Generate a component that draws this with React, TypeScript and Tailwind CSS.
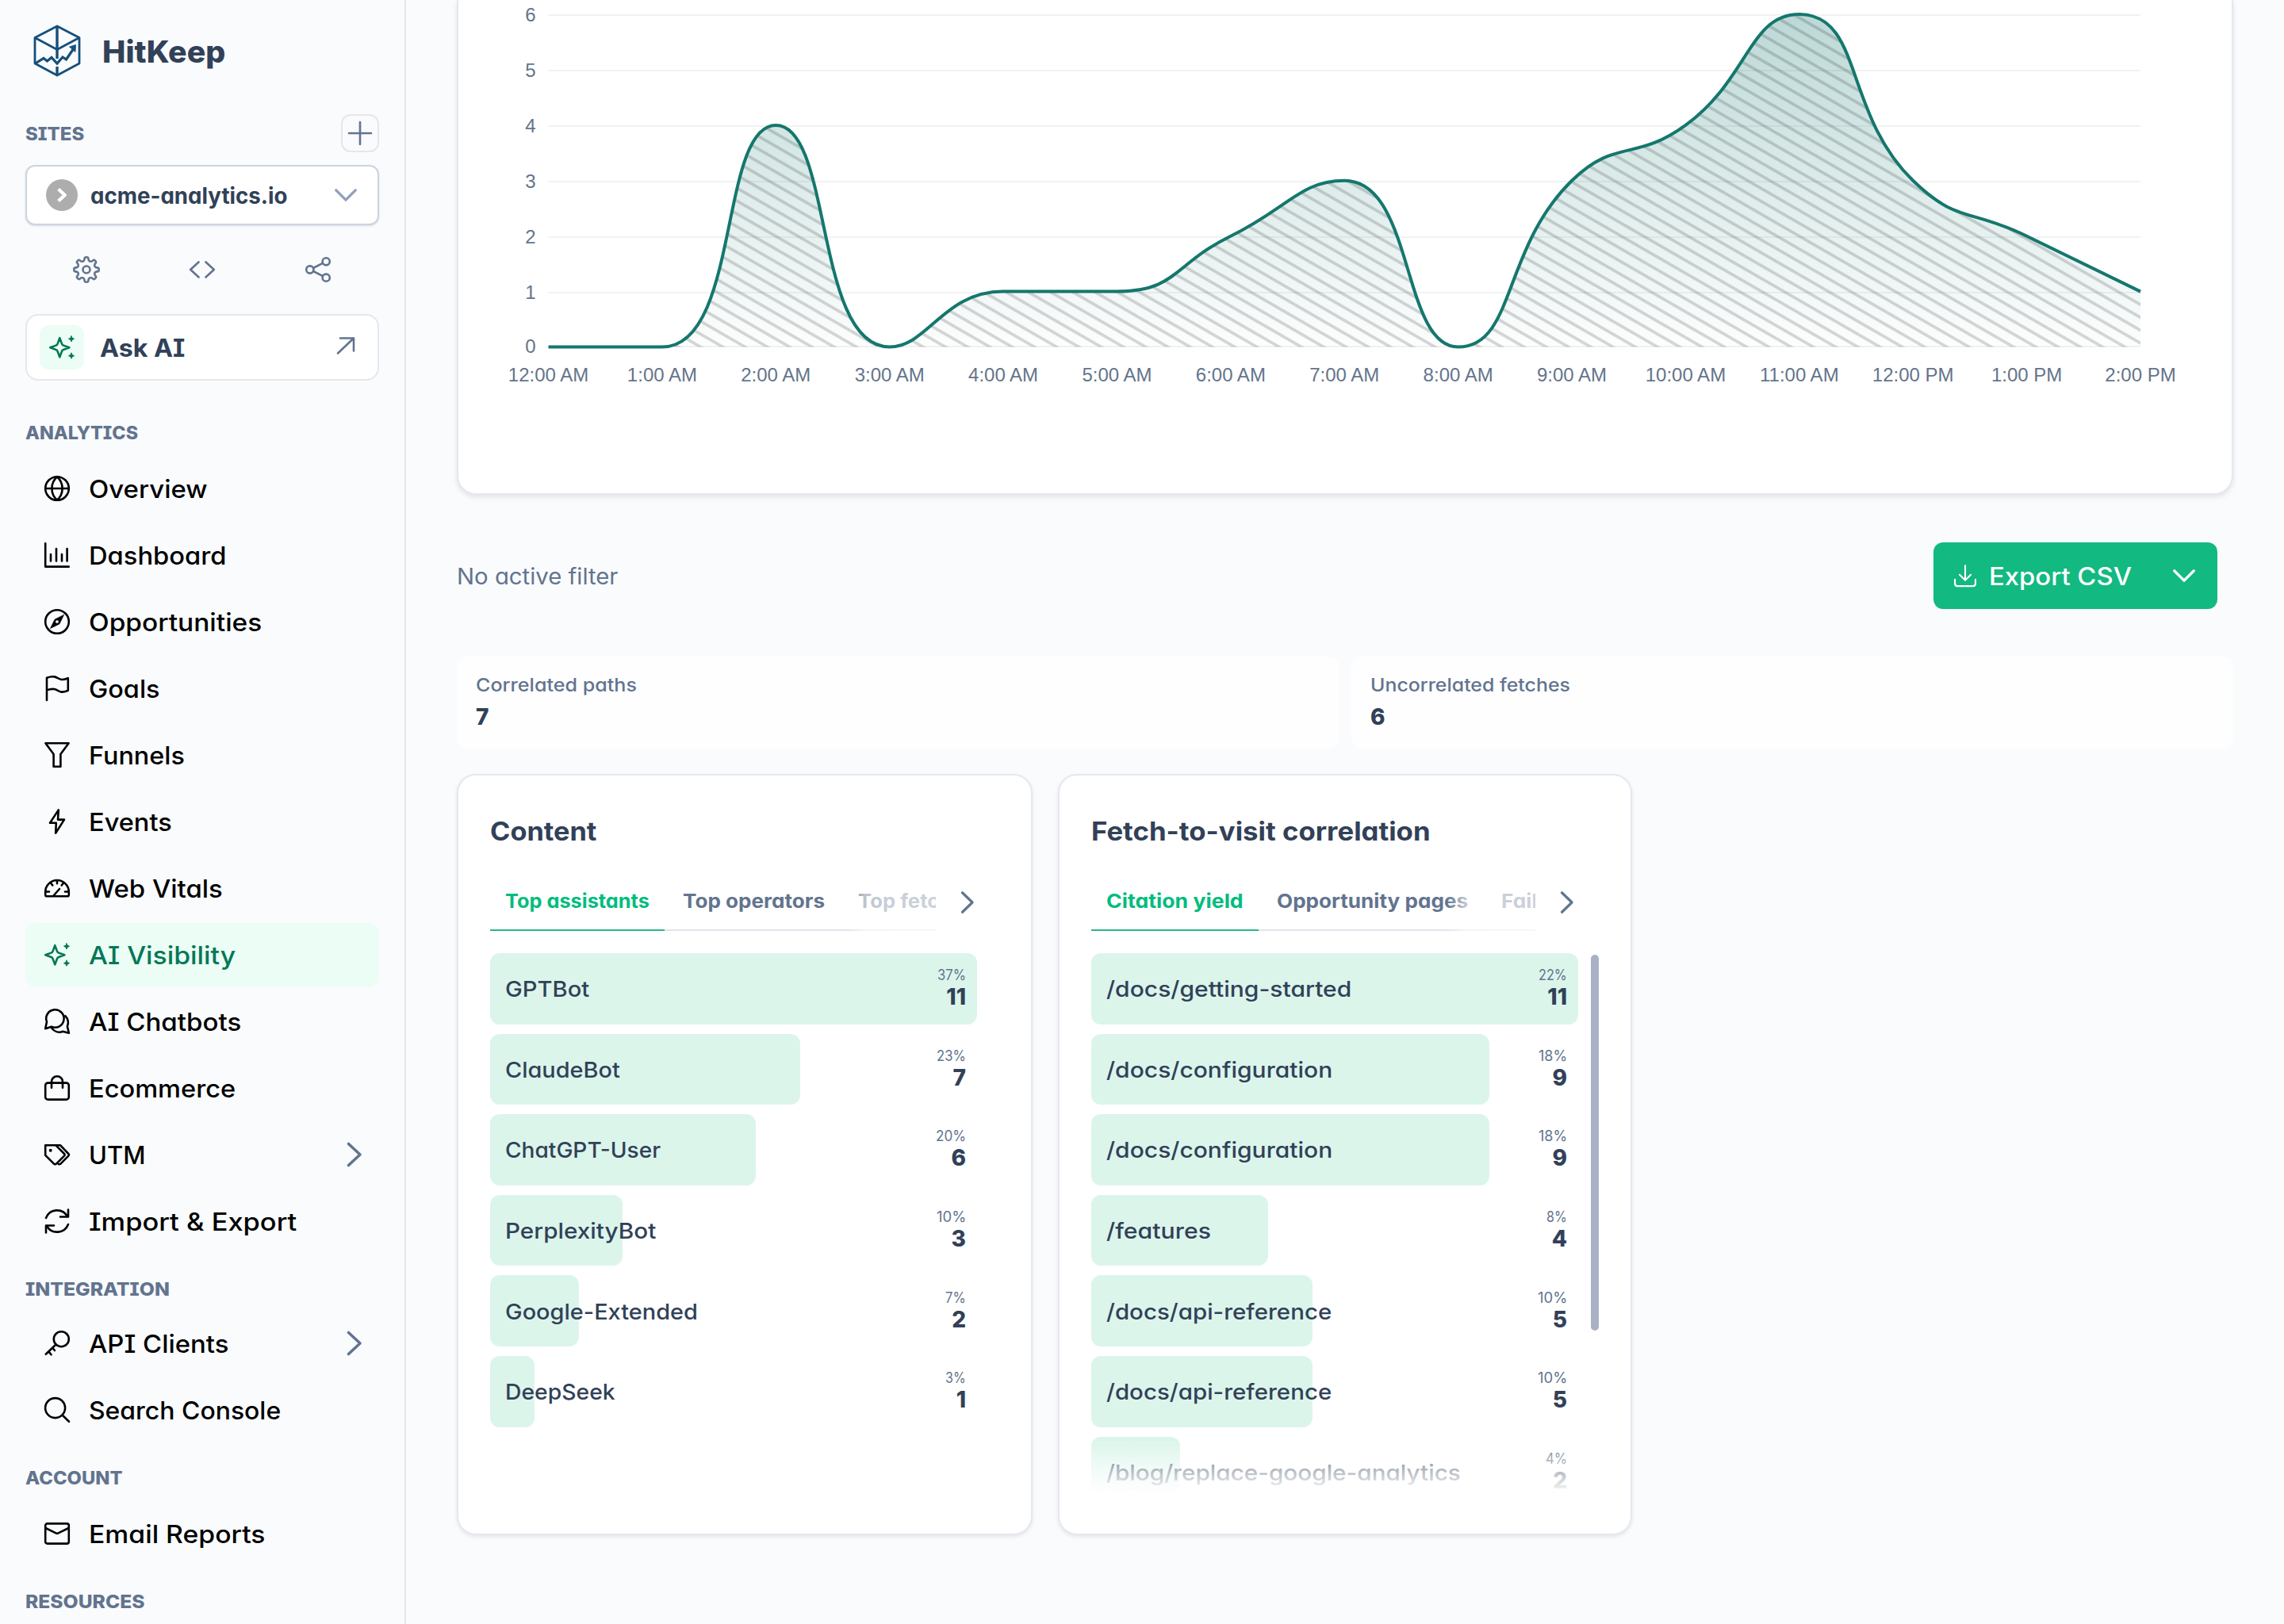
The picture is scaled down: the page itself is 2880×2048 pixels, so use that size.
import { useLayoutEffect, useRef, useState, type ReactNode } from "react";

/** Single-line text stretched horizontally so that it fills a given width. */
function Fit({ w, className = "", children }: { w: number; className?: string; children: string }) {
  const ref = useRef<HTMLSpanElement>(null);
  const [scale, setScale] = useState(1);
  useLayoutEffect(() => {
    const el = ref.current;
    if (el) setScale(w / el.offsetWidth);
  }, [w, children]);
  return (
    <span className={"inline-block shrink-0 translate-y-px whitespace-nowrap " + className} style={{ width: w }}>
      <span ref={ref} className="inline-block origin-left" style={{ transform: `scaleX(${scale})` }}>
        {children}
      </span>
    </span>
  );
}

function Icon({ children, className = "size-8", sw = 2.6 }: { children: ReactNode; className?: string; sw?: number }) {
  return (
    <svg
      viewBox="0 0 32 32"
      className={"shrink-0 overflow-visible " + className}
      fill="none"
      stroke="currentColor"
      strokeWidth={sw}
      strokeLinecap="round"
      strokeLinejoin="round"
    >
      {children}
    </svg>
  );
}

function gearPath() {
  const pts: [number, number][] = [];
  for (let k = 0; k < 8; k++) {
    const steps: [number, number][] = [
      [-20, 11.2],
      [-11, 12.6],
      [-8.5, 15.9],
      [8.5, 15.9],
      [11, 12.6],
      [20, 11.2],
    ];
    for (const [d, r] of steps) {
      const a = ((k * 45 + d - 90) * Math.PI) / 180;
      pts.push([16 + r * Math.cos(a), 16 + r * Math.sin(a)]);
    }
  }
  const mid = (a: [number, number], b: [number, number]) => `${((a[0] + b[0]) / 2).toFixed(2)} ${((a[1] + b[1]) / 2).toFixed(2)}`;
  let d = `M${mid(pts[pts.length - 1], pts[0])}`;
  pts.forEach((p, i) => {
    d += `Q${p[0].toFixed(2)} ${p[1].toFixed(2)} ${mid(p, pts[(i + 1) % pts.length])}`;
  });
  return d + "Z";
}

const icons: Record<string, ReactNode> = {
  globe: (
    <>
      <circle cx="16" cy="16" r="14.8" />
      <path d="M1.2 16h29.6M16 1.2c-4.4 4-6.6 9-6.6 14.8S11.600 26.800 16 30.800c4.400-4 6.600-9 6.600-14.800S20.400 5.200 16 1.200Z" />
    </>
  ),
  chart: (
    <>
      <path d="M1.200 1.200v29.400h29.600" />
      <path d="M8 15v8.500M15 8v15.500M22 15v8.500M28.600 8v15.500" />
    </>
  ),
  compass: (
    <>
      <circle cx="16" cy="16" r="14.800" />
      <path
        d="M24.600 7.400 19.200 18.400a1.500 1.500 0 0 1-.8.8L7.400 24.600l5.400-11a1.500 1.500 0 0 1 .8-.8ZM16 13.800a2.200 2.200 0 1 0 0 4.400 2.200 2.200 0 0 0 0-4.400Z"
        fill="currentColor"
        fillRule="evenodd"
        strokeWidth="0.600"
      />
    </>
  ),
  flag: <path d="M3 31V2.800C6 1.700 9.300 1 12.300 1.400 15.600 1.900 18.200 4.600 21.500 5c3 .3 5.800-.8 8.300-1.800v15.600c-2.500 1-5.300 2.200-8.300 1.800-3.300-.4-5.900-3.200-9.200-3.600-3-.4-6.300.3-9.300 1.400" />,
  filter: <path d="M1.400 1.300h29.200L20.400 15v15.700h-8.800V15Z" />,
  bolt: <path d="M17.800 1.400 7 17.800h7.800l-.6 12.800L25 13.600h-8Z" />,
  gauge: (
    <>
      <path d="M1.200 24.500v-3.700a14.800 14.800 0 0 1 29.600 0v3.700q0 1.800-1.800 1.800H3q-1.800 0-1.800-1.800Z" />
      <path d="M11.500 25.500 19 17M16 6.500v3.800M8 9.500l2.300 3M24 9.500l-2.300 3M2 20.500h4M30 20.500h-4" />
    </>
  ),
  sparkles: (
    <>
      <path d="M13.300 4.200 16 11.600q.5 1.500 2 2l7.400 2.700-7.400 2.700q-1.500.5-2 2l-2.700 7.400-2.700-7.400q-.5-1.500-2-2l-7.400-2.700 7.400-2.700q1.500-.5 2-2Z" />
      <path d="M28 1.800 29.100 4.300 31.500 5.300 29.100 6.400 28 8.900 26.900 6.400 24.500 5.300 26.900 4.300ZM28 23.200 29.100 25.600 31.500 26.700 29.100 27.800 28 30.200 26.900 27.800 24.500 26.700 26.900 25.600Z" fill="currentColor" strokeWidth="1" />
    </>
  ),
  chat: (
    <>
      <path d="M1.200 25.200 3 16.600A11.200 11.200 0 1 1 9 22.800Z" />
      <path d="M26.300 9.200c3.800 4 4.600 8 2.600 13.300l2 8.300-7.600-2C18 30.800 12.500 29 9 24.200" />
    </>
  ),
  bag: (
    <>
      <rect x="1.200" y="9.600" width="29.600" height="21" rx="3.200" />
      <path d="M9 15.800V8.200a7 7 0 0 1 14 0v7.600" />
    </>
  ),
  tags: (
    <>
      <path d="M1.200 4.300h13.300L25 15q1.200 1.300 0 2.600L14.800 27.800q-1.300 1-2.600 0L1.200 16.900Z" />
      <path d="M14.500 4.300h5.700L30.300 15q1.200 1.300 0 2.600L20.200 27.800q-1 .8-2.400.3" />
      <circle cx="7.700" cy="10.800" r="1.300" fill="currentColor" strokeWidth="1.400" />
    </>
  ),
  refresh: (
    <>
      <path d="M2 12A15 15 0 0 1 28.800 9.500M30 20a15 15 0 0 1-26.800 2.500" />
      <path d="M30 1.500V10.500H20M2 30.500V21.500H12" />
    </>
  ),
  key: (
    <>
      <circle cx="21.300" cy="10.700" r="9.500" />
      <path d="M14.500 17.500 1.800 29.800M5.500 26.500l3 3.800M10.300 21.800l2.600 3.200" />
    </>
  ),
  search: (
    <>
      <circle cx="13.600" cy="13.600" r="12.500" />
      <path d="m22.800 22.800 8.200 8" />
    </>
  ),
  mail: (
    <>
      <rect x="1.200" y="3.400" width="29.600" height="25.200" rx="2.400" />
      <path d="M1.500 9 15 15.600q1 .5 2 0L30.500 9" />
    </>
  ),
};

type Item = { icon: string; label: string; w: number; more?: boolean; active?: boolean };

const analytics: Item[] = [
  { icon: "globe", label: "Overview", w: 150 },
  { icon: "chart", label: "Dashboard", w: 174 },
  { icon: "compass", label: "Opportunities", w: 218 },
  { icon: "flag", label: "Goals", w: 90 },
  { icon: "filter", label: "Funnels", w: 121 },
  { icon: "bolt", label: "Events", w: 105 },
  { icon: "gauge", label: "Web Vitals", w: 169 },
  { icon: "sparkles", label: "AI Visibility", w: 185, active: true },
  { icon: "chat", label: "AI Chatbots", w: 192 },
  { icon: "bag", label: "Ecommerce", w: 185 },
  { icon: "tags", label: "UTM", w: 71, more: true },
  { icon: "refresh", label: "Import & Export", w: 262 },
];
const integration: Item[] = [
  { icon: "key", label: "API Clients", w: 176, more: true },
  { icon: "search", label: "Search Console", w: 242 },
];
const account: Item[] = [{ icon: "mail", label: "Email Reports", w: 223 }];

function NavItem({ item }: { item: Item }) {
  return (
    <div
      className={
        "flex h-20 items-center rounded-xl pl-6 pr-[22px] " + (item.active ? "bg-[#ebfdf5] text-[#047857]" : "text-black")
      }
    >
      <Icon>{icons[item.icon]}</Icon>
      <Fit w={item.w} className="ml-6 text-[31px] font-[550]">
        {item.label}
      </Fit>
      {item.more && (
        <Icon className="ml-auto size-8 translate-x-[7px] text-slate-500" sw={3.6}>
          <path d="M8.500 2.500 23 16 8.500 29.500" />
        </Icon>
      )}
    </div>
  );
}

function Nav({ title, w, items, className }: { title: string; w: number; items: Item[]; className: string }) {
  return (
    <div className="shrink-0">
      <div className={"pt-[27px] leading-9 " + className}>
        <Fit w={w} className="text-[23px] font-extrabold text-slate-500">
          {title}
        </Fit>
      </div>
      <div className="flex flex-col gap-1">
        {items.map((i) => (
          <NavItem key={i.label} item={i} />
        ))}
      </div>
    </div>
  );
}

function Logo() {
  return (
    <svg viewBox="42 31 60 66" className="h-[66px] w-[60px] shrink-0" fill="none" stroke="#154f7a" strokeWidth="2.800" strokeLinejoin="round">
      <path d="M72 33 100 47.500V80L72 95 44 80V47.500ZM44 47.500 72 62.500 100 47.500" />
      <path d="M72 33V74M72 84V95" strokeWidth="3.400" />
      <path d="M44.500 80 55 73.500 59.500 77 65 72.500 72 80 79 72 83.500 75 93 61" strokeWidth="3.200" strokeLinejoin="miter" />
      <path d="M87.500 59 95.500 56.500 95 65.500Z" fill="#154f7a" strokeWidth="0.800" />
    </svg>
  );
}

function Sidebar() {
  return (
    <aside className="flex h-full w-[512px] shrink-0 flex-col border-r-2 border-[#e5e7eb] pl-8 pr-8">
      <div className="flex h-[128px] shrink-0 items-center pl-[10px]">
        <Logo />
        <Fit w={155} className="ml-[27px] text-[38px] font-extrabold text-slate-700">
          HitKeep
        </Fit>
      </div>
      <div className="mt-4 flex h-12 shrink-0 items-center justify-between">
        <Fit w={74} className="text-[23px] font-extrabold text-slate-500">
          SITES
        </Fit>
        <div className="flex size-12 items-center justify-center rounded-xl border-2 border-[#e5e7eb] text-slate-500">
          <Icon className="size-8" sw={2.600}>
            <path d="M16 2v28M2 16h28" />
          </Icon>
        </div>
      </div>
      <div className="mt-4 flex h-[76px] shrink-0 items-center rounded-xl border-2 border-slate-300 bg-white pl-6 pr-[26px] shadow-sm">
        <div className="flex size-10 items-center justify-center rounded-full bg-[#adadad] text-white">
          <Icon className="size-5" sw={7}>
            <path d="M9 4 22 16 9 28" strokeLinecap="butt" />
          </Icon>
        </div>
        <Fit w={249} className="ml-4 text-[28px] font-[650] text-slate-700">
          acme-analytics.io
        </Fit>
        <Icon className="ml-auto size-7 text-slate-400" sw={3.800}>
          <path d="M2 9 16 23 30 9" />
        </Icon>
      </div>
      <div className="mt-6 flex h-16 shrink-0 items-center px-1 text-slate-500">
        <div className="flex flex-1 justify-center">
          <Icon>
            <path d={gearPath()} />
            <circle cx="16" cy="16" r="4.500" />
          </Icon>
        </div>
        <div className="flex flex-1 justify-center">
          <Icon>
            <path d="M11.500 6.500 1.200 16 11.500 25.500M20.500 6.500 30.800 16 20.500 25.500" />
          </Icon>
        </div>
        <div className="flex flex-1 justify-center">
          <Icon>
            <circle cx="5.800" cy="16" r="4.600" />
            <circle cx="26.200" cy="5.800" r="4.600" />
            <circle cx="26.200" cy="26.200" r="4.600" />
            <path d="m10 14 12-6.200M10 18l12 6.200" />
          </Icon>
        </div>
      </div>
      <div className="mt-6 flex h-[84px] shrink-0 items-center rounded-2xl border-2 border-[#e5e7eb] bg-white pl-4 pr-[29px]">
        <div className="flex size-14 items-center justify-center rounded-xl bg-[#ebfdf5] text-[#047857]">
          <Icon>{icons.sparkles}</Icon>
        </div>
        <Fit w={107} className="ml-5 text-[31px] font-[650] text-slate-700">
          Ask AI
        </Fit>
        <svg viewBox="0 0 22 22" className="mb-1 ml-auto size-[22px] overflow-visible text-slate-500" fill="none" stroke="currentColor" strokeWidth="2.600" strokeLinecap="round" strokeLinejoin="round">
          <path d="M4 1.500h17v16M21 1.500 1 20.500" />
        </svg>
      </div>
      <div className="mt-5 flex shrink-0 flex-col">
        <Nav title="ANALYTICS" w={142} items={analytics} className="h-[76px]" />
        <Nav title="INTEGRATION" w={182} items={integration} className="h-[74px]" />
        <Nav title="ACCOUNT" w={123} items={account} className="h-[76px]" />
        <Nav title="RESOURCES" w={150} items={[]} className="h-[76px]" />
      </div>
    </aside>
  );
}

const hours = ["12:00 AM", "1:00 AM", "2:00 AM", "3:00 AM", "4:00 AM", "5:00 AM", "6:00 AM", "7:00 AM", "8:00 AM", "9:00 AM", "10:00 AM", "11:00 AM", "12:00 PM", "1:00 PM", "2:00 PM"];
const values = [0, 0, 4, 0, 1, 1, 2, 3, 0, 3, 4, 6, 3, 2, 1];
const gridY = [437, 369, 299, 229, 159, 89, 19];
const X0 = 691.500;
const X1 = 2699;
const BASE = 437.500;
const UNIT = 69.900;

/** Smooth line whose control points never overshoot the neighbouring values. */
function smoothLine() {
  const p = values.map((v, i) => [X0 + ((X1 - X0) * i) / 14, BASE - v * UNIT]);
  const clamp = (v: number, a: number, b: number) => Math.max(Math.min(v, Math.max(a, b)), Math.min(a, b));
  let d = `M${p[0][0]} ${p[0][1]}`;
  let c0 = p[0];
  for (let i = 1; i < p.length; i++) {
    const [x, y] = p[i];
    const prev = p[i - 1];
    const next = p[i + 1];
    let c1 = [x, y];
    let n0 = [x, y];
    if (next) {
      const lp = Math.hypot(x - prev[0], y - prev[1]);
      const ln = Math.hypot(next[0] - x, next[1] - y);
      const r = ln / (ln + lp);
      n0 = [clamp(x + (next[0] - prev[0]) * 0.5 * r, x, next[0]), clamp(y + (next[1] - prev[1]) * 0.5 * r, y, next[1])];
      c1 = [clamp(x - ((n0[0] - x) * lp) / ln, prev[0], x), clamp(y - ((n0[1] - y) * lp) / ln, prev[1], y)];
      n0 = [x + ((x - c1[0]) * ln) / lp, y + ((y - c1[1]) * ln) / lp];
    }
    d += `C${c0[0]} ${c0[1]} ${c1[0]} ${c1[1]} ${x} ${y}`;
    c0 = n0;
  }
  return d;
}

function Chart() {
  const line = smoothLine();
  const area = `${line}L${X1} ${BASE}L${X0} ${BASE}Z`;
  return (
    <svg viewBox="578 0 2236 622" className="h-[622px] w-[2236px] font-['Liberation_Sans',sans-serif] text-[24px]">
      <defs>
        <linearGradient id="fade" gradientUnits="userSpaceOnUse" x1="0" y1="18" x2="0" y2="437">
          <stop offset="0" stopColor="#0f766e" stopOpacity="0.280" />
          <stop offset="1" stopColor="#0f766e" stopOpacity="0.010" />
        </linearGradient>
        <pattern id="hatch" patternUnits="userSpaceOnUse" width="14.030" height="14.030" patternTransform="rotate(30)">
          <rect x="0" y="5.500" width="14.030" height="3.700" fill="#000" fillOpacity="0.160" />
        </pattern>
      </defs>
      {gridY.map((y, v) => (
        <g key={v}>
          <path d={`M${X0} ${y}H${X1}`} stroke="#f1f2f3" strokeWidth="2" />
          <text x="675.500" y={y + 7.500} textAnchor="end" fill="#64748b">
            {v}
          </text>
        </g>
      ))}
      <path d={area} fill="url(#fade)" />
      <path d={area} fill="url(#hatch)" />
      <path d={line} fill="none" stroke="#14776d" strokeWidth="4" strokeLinejoin="bevel" />
      {hours.map((h, i) => (
        <text key={h} x={X0 + ((X1 - X0) * i) / 14} y="481" textAnchor="middle" fill="#64748b">
          {h}
        </text>
      ))}
    </svg>
  );
}

type Row = { label: string; w: number; pct: string; pctW: number; n: number };

const bots: Row[] = [
  { label: "GPTBot", w: 106, pct: "37%", pctW: 36, n: 11 },
  { label: "ClaudeBot", w: 145, pct: "23%", pctW: 37, n: 7 },
  { label: "ChatGPT-User", w: 196, pct: "20%", pctW: 38, n: 6 },
  { label: "PerplexityBot", w: 190, pct: "10%", pctW: 37, n: 3 },
  { label: "Google-Extended", w: 243, pct: "7%", pctW: 26, n: 2 },
  { label: "DeepSeek", w: 139, pct: "3%", pctW: 26, n: 1 },
];
const pages: Row[] = [
  { label: "/docs/getting-started", w: 309, pct: "22%", pctW: 36, n: 11 },
  { label: "/docs/configuration", w: 285, pct: "18%", pctW: 36, n: 9 },
  { label: "/docs/configuration", w: 285, pct: "18%", pctW: 36, n: 9 },
  { label: "/features", w: 132, pct: "8%", pctW: 26, n: 4 },
  { label: "/docs/api-reference", w: 284, pct: "10%", pctW: 37, n: 5 },
  { label: "/docs/api-reference", w: 284, pct: "10%", pctW: 37, n: 5 },
  { label: "/blog/replace-google-analytics", w: 447, pct: "4%", pctW: 27, n: 2 },
];

function BarRow({ row }: { row: Row }) {
  return (
    <div className="relative h-[89.600px] shrink-0">
      <div className="absolute inset-y-0 left-0 rounded-xl bg-[#dcf5eb]" style={{ width: `${(row.n / 11) * 100}%` }} />
      <div className="relative flex h-full items-center justify-between pl-[19px] pr-3.5">
        <Fit w={row.w} className="text-[27.500px] font-[550] text-slate-700">
          {row.label}
        </Fit>
        <div className="mb-1 flex flex-col items-end text-right">
          <Fit w={row.pctW} className="text-[18.500px] leading-6 text-slate-500">
            {row.pct}
          </Fit>
          <span className="pt-px text-[28px] font-extrabold leading-8 text-slate-700">{row.n}</span>
        </div>
      </div>
    </div>
  );
}

function ListCard({ title, titleW, tabs, rows, scroll }: { title: string; titleW: number; tabs: { label: string; w: number }[]; rows: Row[]; scroll?: boolean }) {
  return (
    <section className="flex h-[960px] flex-col rounded-3xl border-2 border-[#e5e8ee] bg-white px-10 pt-10 shadow-[0_2px_5px_rgba(15,23,42,0.09)]">
      <h2 className="flex h-[60px] items-center text-[32px] font-bold text-slate-700">
        <Fit w={titleW}>{title}</Fit>
      </h2>
      <div className="mt-[18px] flex h-[78px]">
        <div className="relative flex w-[563px] gap-1 overflow-hidden">
          <div className="absolute inset-x-0 bottom-0 h-0.5 bg-[#e2e4ec]" />
          {tabs.map((t, i) => (
            <div
              key={t.label}
              className={
                "relative flex h-full shrink-0 items-center border-b-2 px-[19px] pt-0.5 text-[24.500px] font-[650] " +
                (i === 0 ? "border-[#2bb48a] text-emerald-500" : "border-transparent text-slate-500")
              }
            >
              <Fit w={t.w}>{t.label}</Fit>
            </div>
          ))}
          <div className="absolute inset-y-0 right-0 w-28 bg-[linear-gradient(to_right,rgba(255,255,255,0),rgba(255,255,255,0.580)_20%,rgba(255,255,255,0.650)_45%,rgba(255,255,255,0.680))]" />
        </div>
        <div className="flex w-20 items-center justify-center text-slate-500">
          <Icon className="mt-1.5 size-7" sw={3.600}>
            <path d="M8.500 2 23 16 8.500 30" />
          </Icon>
        </div>
      </div>
      <div className="mt-7 flex h-[678px] gap-4">
        <div className="relative flex w-[614px] flex-col gap-3 overflow-hidden">
          {rows.map((r, i) => (
            <BarRow key={i} row={r} />
          ))}
          {scroll && (
            <div className="absolute inset-x-0 bottom-0 h-16 bg-[linear-gradient(to_bottom,rgba(255,255,255,0),rgba(255,255,255,0.600)_55%,rgba(255,255,255,0.950))]" />
          )}
        </div>
        {scroll && <div className="mt-0.5 h-[474px] w-2.5 shrink-0 rounded-full bg-[#a8b2c4]" />}
      </div>
    </section>
  );
}

function Stat({ label, w, value }: { label: string; w: number; value: string }) {
  return (
    <div className="h-[116px] rounded-xl bg-white/80 pl-6 pt-[19px]">
      <div className="h-8 leading-8">
        <Fit w={w} className="text-[23.500px] font-[550] text-slate-500">
          {label}
        </Fit>
      </div>
      <div className="mt-[5px] h-10 text-[28px] font-extrabold leading-10 text-slate-700">{value}</div>
    </div>
  );
}

export default function App() {
  return (
    <div className="flex h-[2048px] w-[2880px] overflow-hidden bg-[#fafbfd] font-['Inter',sans-serif] [font-feature-settings:'cv11','cv08']">
      <Sidebar />
      <main className="flex w-[2368px] flex-col px-16">
        <section className="h-[624px] shrink-0 rounded-b-3xl border-2 border-t-0 border-[#e5e8ee] bg-white shadow-[0_3px_6px_rgba(15,23,42,0.10)]">
          <Chart />
        </section>
        <div className="mt-[60px] flex h-[84px] shrink-0 items-center justify-between pr-5">
          <Fit w={203} className="text-[28px] text-slate-500">
            No active filter
          </Fit>
          <div className="flex h-full w-[358px] items-center rounded-xl bg-[#12b981] pl-[26px] pr-7 text-white">
            <Icon className="size-7" sw={2.400}>
              <path d="M16 1.500V22M8 14.500 16 22.500 24 14.500M1.200 21.500V27q0 4 4 4h21.600q4 0 4-4v-5.500" />
            </Icon>
            <Fit w={180} className="ml-4 text-[31px] font-[550]">
              Export CSV
            </Fit>
            <Icon className="ml-auto size-7" sw={4}>
              <path d="M2 9 16 23 30 9" />
            </Icon>
          </div>
        </div>
        <div className="mt-[60px] grid shrink-0 grid-cols-2 gap-4">
          <Stat label="Correlated paths" w={203} value="7" />
          <Stat label="Uncorrelated fetches" w={252} value="6" />
        </div>
        <div className="mt-8 grid shrink-0 grid-cols-[726px_724px] gap-8">
          <ListCard
            title="Content"
            titleW={134}
            tabs={[
              { label: "Top assistants", w: 182 },
              { label: "Top operators", w: 179 },
              { label: "Top fetched", w: 150 },
            ]}
            rows={bots}
          />
          <ListCard
            title="Fetch-to-visit correlation"
            titleW={428}
            tabs={[
              { label: "Citation yield", w: 173 },
              { label: "Opportunity pages", w: 241 },
              { label: "Failures", w: 102 },
            ]}
            rows={pages}
            scroll
          />
        </div>
      </main>
    </div>
  );
}
